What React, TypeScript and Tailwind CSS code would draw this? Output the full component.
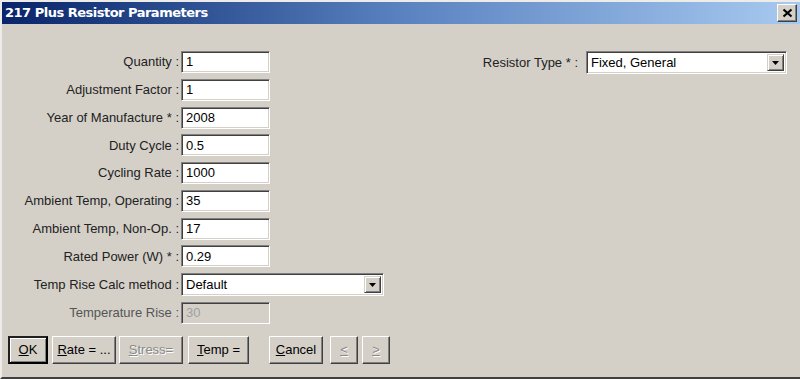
import React from "react";

const font = { fontFamily: '"Liberation Sans", Arial, sans-serif' };

function Field({ value, disabled }: { value: string; disabled?: boolean }) {
  return (
    <div
      className={`h-[22px] w-[89px] border border-t-[#808080] border-l-[#808080] border-r-white border-b-white shadow-[inset_1px_1px_#404040,inset_-1px_-1px_#d4d0c8] ${disabled ? "bg-[#d4d0c8] text-[#a0a0a0]" : "bg-white text-black"} flex items-center pl-[4px] text-[13px]`}
    >
      {value}
    </div>
  );
}

function Arrow() {
  return (
    <div className="w-[17px] h-[17px] bg-[#d4d0c8] border border-t-[#d4d0c8] border-l-[#d4d0c8] border-r-[#404040] border-b-[#404040] shadow-[inset_1px_1px_white,inset_-1px_-1px_#808080] flex items-center justify-center">
      <svg width="7" height="4" viewBox="0 0 7 4">
        <path d="M0 0h7L3.5 4z" fill="#000" />
      </svg>
    </div>
  );
}

function Select({ value, width }: { value: string; width: string }) {
  return (
    <div
      className={`h-[23px] ${width} bg-white border border-t-[#808080] border-l-[#808080] border-r-white border-b-white shadow-[inset_1px_1px_#404040,inset_-1px_-1px_#d4d0c8] flex items-center justify-between pl-[4px] pr-[2px] text-[13px] text-black`}
    >
      <span>{value}</span>
      <Arrow />
    </div>
  );
}

function Btn({
  children,
  w,
  isDefault,
  disabled,
}: {
  children: React.ReactNode;
  w: string;
  isDefault?: boolean;
  disabled?: boolean;
}) {
  return (
    <div
      className={`${w} h-[28px] flex items-center justify-center text-[13px] bg-[#d4d0c8] ${
        isDefault
          ? "border-2 border-t-[#202020] border-l-[#202020] border-r-[#000] border-b-[#000] shadow-[inset_1px_1px_white,inset_-1px_-1px_#808080]"
          : "border border-t-white border-l-white border-r-[#404040] border-b-[#404040] shadow-[inset_-1px_-1px_#808080]"
      } ${disabled ? "text-[#8a8a8a] [text-shadow:1px_1px_#fff]" : "text-black"}`}
    >
      {children}
    </div>
  );
}

const rows: [string, string][] = [
  ["Quantity :", "1"],
  ["Adjustment Factor :", "1"],
  ["Year of Manufacture * :", "2008"],
  ["Duty Cycle :", "0.5"],
  ["Cycling Rate :", "1000"],
  ["Ambient Temp, Operating :", "35"],
  ["Ambient Temp, Non-Op. :", "17"],
  ["Rated Power (W) * :", "0.29"],
];

export default function App() {
  return (
    <div
      className="w-[800px] h-[379px] bg-[#d4d0c8] border-t-2 border-l-2 border-t-[#eeece8] border-l-[#eeece8] border-b-2 border-b-[#404040] flex flex-col text-[#222]"
      style={font}
    >
      <div className="h-[22px] bg-gradient-to-r from-[#0a246a] via-[#5a82c0] to-[#a8caf0] flex items-center justify-between pl-[3px] pr-[3px]">
        <span
          className="text-white font-bold text-[13px] tracking-[-0.5px]"
          style={{ fontFamily: '"DejaVu Sans", Verdana, sans-serif' }}
        >
          217 Plus Resistor Parameters
        </span>
        <div className="w-[20px] h-[18px] bg-[#d4d0c8] border border-t-white border-l-white border-r-[#404040] border-b-[#404040] shadow-[inset_-1px_-1px_#808080] flex items-center justify-center">
          <svg width="11" height="10" viewBox="0 0 11 10">
            <path d="M1.5 1.5l8 7M9.5 1.5l-8 7" stroke="#000" strokeWidth="2.2" />
          </svg>
        </div>
      </div>

      <div className="flex pt-[27px]">
        <div className="flex flex-col gap-[5.75px]">
          {rows.map(([l, v]) => (
            <div key={l} className="flex items-center">
              <div className="w-[179px] text-right pr-[2px] text-[13px]">{l}</div>
              <Field value={v} />
            </div>
          ))}
          <div className="flex items-center">
            <div className="w-[179px] text-right pr-[2px] text-[13px]">Temp Rise Calc method :</div>
            <Select value="Default" width="w-[203px]" />
          </div>
          <div className="flex items-center">
            <div className="w-[179px] text-right pr-[2px] text-[13px] text-[#555]">Temperature Rise :</div>
            <Field value="30" disabled />
          </div>
        </div>
        <div className="flex items-start ml-auto mr-[13px]">
          <div className="flex items-center">
            <div className="text-right pr-[8px] text-[13px]">Resistor Type * :</div>
            <Select value="Fixed, General" width="w-[201px]" />
          </div>
        </div>
      </div>

      <div className="flex items-center mt-[12px] pl-[6px]">
        <Btn w="w-[40px]" isDefault>
          <span><u>O</u>K</span>
        </Btn>
        <div className="w-[4px]" />
        <Btn w="w-[64px]">
          <span><u>R</u>ate = ...</span>
        </Btn>
        <div className="w-[3px]" />
        <Btn w="w-[64px]" disabled>
          <span><u>S</u>tress=</span>
        </Btn>
        <div className="w-[5px]" />
        <Btn w="w-[61px]">
          <span><u>T</u>emp =</span>
        </Btn>
        <div className="w-[20px]" />
        <Btn w="w-[54px]">
          <span><u>C</u>ancel</span>
        </Btn>
        <div className="w-[7px]" />
        <Btn w="w-[28px]" disabled>
          <u>&lt;</u>
        </Btn>
        <div className="w-[4px]" />
        <Btn w="w-[28px]" disabled>
          <u>&gt;</u>
        </Btn>
      </div>
    </div>
  );
}
